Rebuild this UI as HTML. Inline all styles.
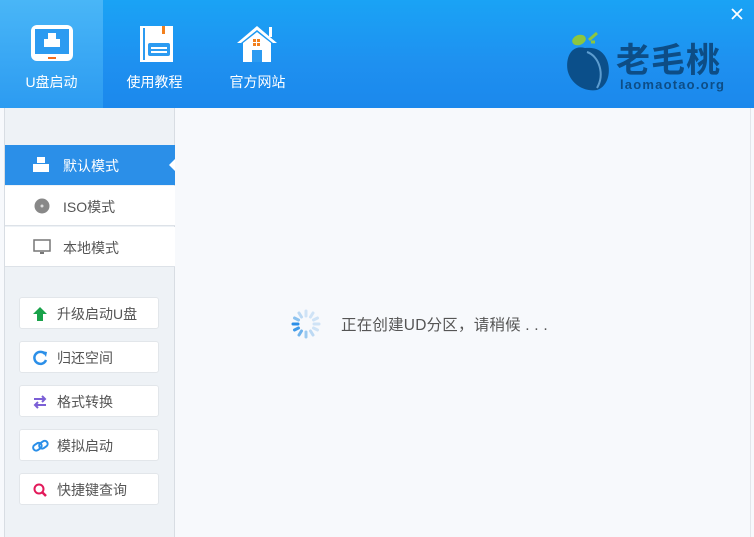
<!DOCTYPE html>
<html><head><meta charset="utf-8"><style>
*{margin:0;padding:0;box-sizing:border-box}
body{width:754px;height:537px;overflow:hidden;background:#f7f9fc;font-family:"Liberation Sans","Noto Sans CJK SC",sans-serif;position:relative}
.hdr{position:absolute;left:0;top:0;width:754px;height:108px;background:linear-gradient(180deg,#1aa3f5 0%,#1e90f0 60%,#1b88ec 100%)}
.tab{position:absolute;top:0;height:108px;width:103px;color:#fff;font-size:14px;text-align:center}
.tab .lbl{position:absolute;top:72px;left:0;right:0}
.tab1{left:0;background:linear-gradient(180deg,#49b6f7,#2c9bf1)}
.side{position:absolute;left:4px;top:108px;width:171px;height:429px;background:#eef2f6;border-left:1px solid #d8dde3;border-right:1px solid #d8dde3}
.mi{position:absolute;left:0;width:170px;height:40px;font-size:14px;color:#555;background:#fff;border-bottom:1px solid #dde2e8}
.mi span{position:absolute;left:58px;top:11px}
.sel{background:#2b8fe8;color:#fff}
.btn{position:absolute;left:14px;width:140px;height:32px;background:#fff;border:1px solid #e2e6ea;border-radius:3px;font-size:14px;color:#555}
.btn span{position:absolute;left:37px;top:6px}
.btn svg{position:absolute;left:12px;top:8px}
.load{position:absolute;left:341px;top:313px;font-size:15.5px;color:#555;letter-spacing:0.2px}
</style></head><body>
<div class="hdr">
 <div class="tab tab1">
  <svg style="position:absolute;left:30px;top:24px" width="44" height="38" viewBox="0 0 44 38"><rect x="1" y="1" width="42" height="36" rx="6" fill="#fff"/><rect x="5" y="5" width="34" height="25" fill="#2c9bf1"/><rect x="18" y="9" width="8" height="6" fill="#fff"/><rect x="14" y="15" width="16" height="8" fill="#fff"/><rect x="18" y="33" width="8" height="2" fill="#f26b1d"/></svg>
  <div class="lbl">U盘启动</div></div>
 <div class="tab" style="left:103px">
  <svg style="position:absolute;left:36px;top:25px" width="36" height="38" viewBox="0 0 36 38"><rect x="1" y="1" width="33" height="36" fill="#fff"/><rect x="4" y="3" width="2" height="32" fill="#2c9bf1"/><rect x="23" y="1" width="3" height="8" fill="#f2801d"/><rect x="9" y="18" width="22" height="13" rx="2" fill="#2c9bf1"/><rect x="12" y="22" width="16" height="2" fill="#fff"/><rect x="12" y="26" width="16" height="2" fill="#fff"/></svg>
  <div class="lbl">使用教程</div></div>
 <div class="tab" style="left:206px">
  <svg style="position:absolute;left:30px;top:24px" width="42" height="38" viewBox="0 0 42 38"><path d="M1 19 L21 2 L41 19 L37 19 L21 6 L5 19Z" fill="#fff"/><rect x="33" y="3" width="3" height="10" fill="#fff"/><path d="M7 19 L21 8 L35 19 L35 38 L7 38Z" fill="#fff"/><rect x="17" y="15" width="3" height="3" fill="#f2801d"/><rect x="21" y="15" width="3" height="3" fill="#f2801d"/><rect x="17" y="19" width="3" height="3" fill="#f2801d"/><rect x="21" y="19" width="3" height="3" fill="#f2801d"/><rect x="16" y="26" width="10" height="12" fill="#2c9bf1"/></svg>
  <div class="lbl">官方网站</div></div>
 <svg style="position:absolute;left:565px;top:30px" width="50" height="65" viewBox="0 0 50 65"><ellipse cx="14" cy="10" rx="7" ry="5" fill="#8cc63f" transform="rotate(-20 14 10)"/><path d="M24 10 L32 3 M26 12 L30 12" stroke="#8cc63f" stroke-width="3"/><path d="M20 18 C5 14 0 30 3 42 C7 55 20 62 32 60 C44 56 46 40 42 30 C38 20 30 17 20 18Z" fill="#0b4f8a"/><path d="M22 22 C34 26 40 44 32 58" stroke="#5d9dd0" stroke-width="2" fill="none"/></svg>
 <div style="position:absolute;left:616px;top:44px;font-size:34px;line-height:34px;font-weight:bold;color:#0d4d86;letter-spacing:1px">老毛桃</div>
 <div style="position:absolute;left:620px;top:78px;font-size:13px;line-height:13px;font-weight:bold;color:#0d4d86;letter-spacing:1.2px">laomaotao.org</div>
 <svg style="position:absolute;left:731px;top:8px" width="12" height="12"><path d="M1 1 L11 11 M11 1 L1 11" stroke="#fff" stroke-width="1.8"/></svg>
</div>
<div style="position:absolute;left:750px;top:108px;width:1px;height:429px;background:#e2e6ea"></div>
<div class="side">
 <div class="mi sel" style="top:37px;border-bottom:none">
  <svg style="position:absolute;left:27px;top:12px" width="18" height="16"><rect x="5" y="0" width="8" height="6" fill="#fff"/><rect x="1" y="7" width="16" height="8" fill="#fff"/></svg><span>默认模式</span>
  <div style="position:absolute;right:0;top:14px;border:6px solid transparent;border-right-color:#fff"></div></div>
 <div class="mi" style="top:78px"><svg style="position:absolute;left:29px;top:12px" width="16" height="16"><circle cx="8" cy="8" r="7.5" fill="#888"/><circle cx="8" cy="8" r="1.5" fill="#ddd"/></svg><span>ISO模式</span></div>
 <div class="mi" style="top:119px"><svg style="position:absolute;left:28px;top:12px" width="18" height="16"><rect x="1" y="1" width="16" height="11" fill="none" stroke="#777" stroke-width="1.5"/><rect x="7" y="13" width="4" height="2" fill="#777"/></svg><span>本地模式</span></div>
 <div class="btn" style="top:189px"><svg width="16" height="16"><path d="M8 1 L15 8 L11 8 L11 15 L5 15 L5 8 L1 8Z" fill="#19a24a"/></svg><span>升级启动U盘</span></div>
 <div class="btn" style="top:233px"><svg width="16" height="16"><path d="M13 4 A6 6 0 1 0 14 10" stroke="#2b8fe8" stroke-width="2.5" fill="none"/><path d="M10 1 L15 2 L14 7Z" fill="#2b8fe8"/></svg><span>归还空间</span></div>
 <div class="btn" style="top:277px"><svg width="16" height="16"><path d="M2 5 H12 M10 2 L13 5 L10 8 M14 11 H4 M6 8 L3 11 L6 14" stroke="#7b5fd6" stroke-width="2" fill="none"/></svg><span>格式转换</span></div>
 <div class="btn" style="top:321px"><svg width="18" height="16"><rect x="1" y="6" width="9" height="6" rx="3" transform="rotate(-35 5 9)" stroke="#2b8fe8" stroke-width="2" fill="none"/><rect x="7" y="4" width="9" height="6" rx="3" transform="rotate(-35 11 7)" stroke="#2b8fe8" stroke-width="2" fill="none"/></svg><span>模拟启动</span></div>
 <div class="btn" style="top:365px"><svg width="16" height="16"><circle cx="7" cy="7" r="4.5" stroke="#e2195a" stroke-width="2" fill="none"/><path d="M10 10 L14 14" stroke="#e2195a" stroke-width="2.5"/></svg><span>快捷键查询</span></div>
</div>
<svg style="position:absolute;left:289px;top:308px" width="34" height="32" viewBox="-16 -16 32 32">
 <g stroke-width="3" stroke-linecap="round">
 <line x1="0" y1="-13" x2="0" y2="-8" stroke="#cfe3f6"/>
 <line x1="7" y1="-11" x2="4.5" y2="-7" stroke="#cfe3f6"/>
 <line x1="11.5" y1="-6" x2="7.5" y2="-4" stroke="#cfe3f6"/>
 <line x1="13" y1="0" x2="8" y2="0" stroke="#cfe3f6"/>
 <line x1="11.5" y1="6" x2="7.5" y2="4" stroke="#cfe3f6"/>
 <line x1="7" y1="11" x2="4.5" y2="7" stroke="#bcd9f3"/>
 <line x1="0" y1="13" x2="0" y2="8" stroke="#9ccaf0"/>
 <line x1="-7" y1="11" x2="-4.5" y2="7" stroke="#6fb3ec"/>
 <line x1="-11.5" y1="6" x2="-7.5" y2="4" stroke="#3f9ae8"/>
 <line x1="-13" y1="0" x2="-8" y2="0" stroke="#2b8fe8"/>
 <line x1="-11.5" y1="-6" x2="-7.5" y2="-4" stroke="#8cc2ef"/>
 <line x1="-7" y1="-11" x2="-4.5" y2="-7" stroke="#bcd9f3"/>
 </g></svg>
<div class="load">正在创建UD分区，请稍候 . . .</div>
</body></html>
